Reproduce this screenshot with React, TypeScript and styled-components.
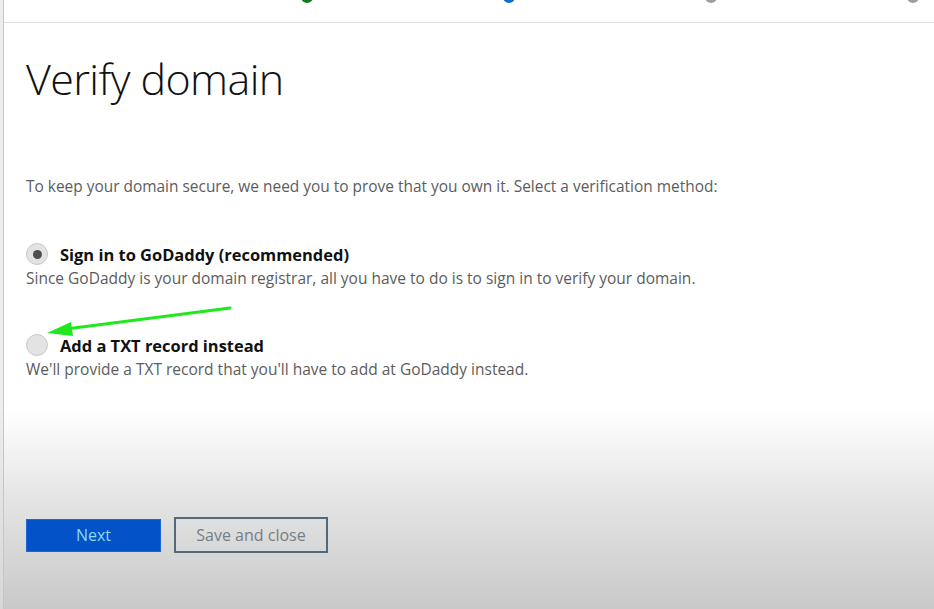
import React, { useState } from 'react';
import styled, { createGlobalStyle } from 'styled-components';

const GlobalStyle = createGlobalStyle`
  html, body {
    margin: 0;
    padding: 0;
    width: 934px;
    height: 609px;
    overflow: hidden;
  }
  body {
    font-family: 'Open Sans', 'Liberation Sans', sans-serif;
  }
  * { box-sizing: border-box; }
`;

const Frame = styled.div`
  position: relative;
  display: flex;
  width: 934px;
  height: 609px;
  background: linear-gradient(to bottom, #ffffff 0px, #ffffff 410px, #e4e4e4 500px, #c9c9c9 609px);
`;

const LeftStrip = styled.div`
  width: 4px;
  flex-shrink: 0;
  background: rgba(225, 225, 225, 0.6);
  border-right: 1px solid #c6c6c6;
`;

const Main = styled.div`
  flex: 1;
  display: flex;
  flex-direction: column;
`;

const Header = styled.div`
  height: 23px;
  flex-shrink: 0;
  border-bottom: 1px solid #e2e2e2;
  display: flex;
  gap: 190px;
  padding-left: 297px;
  overflow: hidden;
`;

const StepDot = styled.span<{ $color: string }>`
  width: 12px;
  height: 12px;
  margin-top: -9px;
  border-radius: 50%;
  background: ${({ $color }) => $color};
`;

const Content = styled.div`
  padding: 26px 0 0 22px;
  display: flex;
  flex-direction: column;
`;

const Title = styled.h1`
  margin: 0;
  font-size: 43px;
  font-weight: 300;
  color: #111;
  line-height: 60px;
  letter-spacing: -0.6px;
`;

const Intro = styled.p`
  margin: 66px 0 0;
  font-size: 15.45px;
  color: #5c5c5c;
  line-height: 22px;
`;

const OptionList = styled.div`
  margin-top: 45px;
  display: flex;
  flex-direction: column;
  gap: 44px;
`;

const Option = styled.label`
  display: flex;
  flex-direction: column;
  cursor: pointer;
`;

const OptionHead = styled.div`
  display: flex;
  align-items: center;
  gap: 12px;
  height: 24px;
`;

const Radio = styled.span<{ $checked: boolean }>`
  width: 22px;
  height: 22px;
  border-radius: 50%;
  background: #e3e3e3;
  border: 1px solid #c9c9c9;
  display: flex;
  align-items: center;
  justify-content: center;
  &::after {
    content: '';
    width: 9px;
    height: 9px;
    border-radius: 50%;
    background: #505050;
    display: ${({ $checked }) => ($checked ? 'block' : 'none')};
  }
`;

const OptionLabel = styled.span`
  font-size: 16.45px;
  font-weight: 700;
  color: #111;
`;

const OptionDesc = styled.span`
  margin-top: 1px;
  font-size: 15.5px;
  color: #5c5c5c;
  line-height: 22px;
`;

const Actions = styled.div`
  margin-top: 137px;
  display: flex;
  align-items: center;
  gap: 13px;
`;

const Button = styled.button<{ $primary?: boolean }>`
  font-family: 'Open Sans', 'Liberation Sans', sans-serif;
  font-size: 16px;
  cursor: pointer;
  ${({ $primary }) =>
    $primary
      ? `
    width: 135px;
    height: 33px;
    background: #0452c8;
    color: #86dcf4;
    border: 1px solid #1a66d8;
  `
      : `
    width: 154px;
    height: 36px;
    background: transparent;
    color: #747e86;
    border: 2px solid #53697a;
  `}
`;

const Arrow = styled.svg`
  position: absolute;
  left: 40px;
  top: 300px;
  pointer-events: none;
`;

export default function App() {
  const [method, setMethod] = useState('signin');

  return (
    <>
      <GlobalStyle />
      <Frame>
        <LeftStrip />
        <Main>
          <Header>
            <StepDot $color="#0f7b1a" />
            <StepDot $color="#0a6fd8" />
            <StepDot $color="#9e9e9e" />
            <StepDot $color="#9e9e9e" />
          </Header>
          <Content>
            <Title>Verify domain</Title>
            <Intro>
              To keep your domain secure, we need you to prove that you own it. Select a verification method:
            </Intro>
            <OptionList>
              <Option onClick={() => setMethod('signin')}>
                <OptionHead>
                  <Radio $checked={method === 'signin'} />
                  <OptionLabel>Sign in to GoDaddy (recommended)</OptionLabel>
                </OptionHead>
                <OptionDesc>
                  Since GoDaddy is your domain registrar, all you have to do is to sign in to verify your domain.
                </OptionDesc>
              </Option>
              <Option onClick={() => setMethod('txt')}>
                <OptionHead>
                  <Radio $checked={method === 'txt'} />
                  <OptionLabel>Add a TXT record instead</OptionLabel>
                </OptionHead>
                <OptionDesc>We'll provide a TXT record that you'll have to add at GoDaddy instead.</OptionDesc>
              </Option>
            </OptionList>
            <Actions>
              <Button $primary>Next</Button>
              <Button>Save and close</Button>
            </Actions>
          </Content>
        </Main>
        <Arrow width="200" height="40" viewBox="0 0 200 40">
          <line x1="190" y1="8" x2="26" y2="29" stroke="#1fe81f" strokeWidth="3" strokeLinecap="round" />
          <polygon points="7,33 31,22 33,36" fill="#1fe81f" />
        </Arrow>
      </Frame>
    </>
  );
}
